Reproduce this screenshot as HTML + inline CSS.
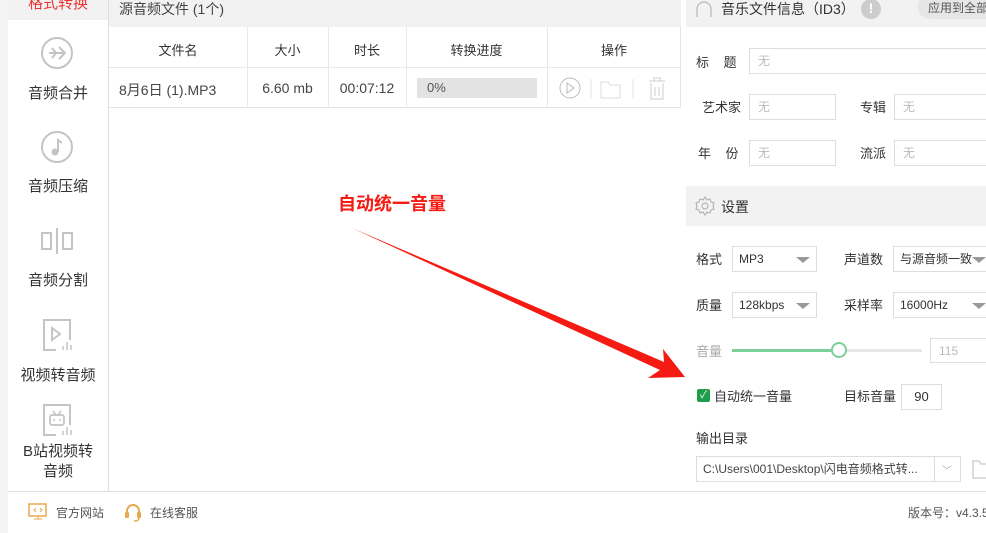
<!DOCTYPE html>
<html><head><meta charset="utf-8"><style>
*{margin:0;padding:0;box-sizing:border-box;white-space:nowrap}
body{width:986px;height:533px;overflow:hidden;background:#fff;font-family:"Liberation Sans","Noto Sans CJK SC",sans-serif;font-size:13px;color:#333;position:relative}
.a{position:absolute}
.side{left:8px;top:0;width:101px;height:491px;border-right:1px solid #ddd;background:#fff}
.si{position:absolute;left:0;width:100px;text-align:center;font-size:15px;color:#333}
.in{position:absolute;border:1px solid #ddd;height:26px;color:#bbb;font-size:12px;padding-left:8px;line-height:24px;background:#fff}
.lb{position:absolute;font-size:13px;color:#333}
.sel{position:absolute;border:1px solid #ddd;height:26px;font-size:12px;padding-left:6px;line-height:24px;color:#333;background:#fff}
.sel:after{content:"";position:absolute;right:6px;top:10px;border-left:7px solid transparent;border-right:7px solid transparent;border-top:6px solid #999}
</style></head><body>
<div class="a" style="left:0;top:0;width:8px;height:533px;background:#f4f4f4"></div>
<div class="a side">
 <div class="a" style="left:0;top:0;width:100px;height:20px;background:#f2f2f2"></div>
 <div class="si" style="top:-8px;color:#e33">格式转换</div>
 <svg class="a" style="left:32px;top:36px" width="34" height="34"><circle cx="17" cy="17" r="15" fill="none" stroke="#c4c4c4" stroke-width="2"/><path d="M9 17h16M19 11l6 6-6 6M12 12l4 5-4 5" fill="none" stroke="#c4c4c4" stroke-width="2"/></svg>
 <div class="si" style="top:82px">音频合并</div>
 <svg class="a" style="left:32px;top:130px" width="34" height="34"><circle cx="17" cy="17" r="15" fill="none" stroke="#c4c4c4" stroke-width="2"/><circle cx="15" cy="22" r="3.5" fill="#c4c4c4"/><path d="M18 22V10l4 3" fill="none" stroke="#c4c4c4" stroke-width="2"/></svg>
 <div class="si" style="top:175px">音频压缩</div>
 <svg class="a" style="left:32px;top:226px" width="34" height="30"><rect x="2" y="7" width="9" height="16" fill="none" stroke="#c4c4c4" stroke-width="2"/><rect x="23" y="7" width="9" height="16" fill="none" stroke="#c4c4c4" stroke-width="2"/><path d="M17 2v26" stroke="#c4c4c4" stroke-width="2"/></svg>
 <div class="si" style="top:269px">音频分割</div>
 <svg class="a" style="left:34px;top:318px" width="34" height="36"><path d="M28 22V2H2v30h12" fill="none" stroke="#c4c4c4" stroke-width="2"/><path d="M10 10l8 6-8 6z" fill="none" stroke="#c4c4c4" stroke-width="2"/><path d="M21 28v4M25 24v8M29 27v5" stroke="#c4c4c4" stroke-width="1.5"/></svg>
 <div class="si" style="top:364px">视频转音频</div>
 <svg class="a" style="left:34px;top:403px" width="34" height="36"><path d="M28 22V2H2v30h12" fill="none" stroke="#c4c4c4" stroke-width="2"/><rect x="8" y="12" width="14" height="10" rx="2" fill="none" stroke="#c4c4c4" stroke-width="1.8"/><path d="M11 8l3 4M19 8l-3 4M12 16v2M18 16v2" stroke="#c4c4c4" stroke-width="1.5"/><path d="M21 28v4M25 24v8M29 27v5" stroke="#c4c4c4" stroke-width="1.5"/></svg>
 <div class="si" style="top:442px;line-height:20px">B站视频转<br>音频</div>
</div>
<div class="a" style="left:109px;top:0;width:572px;height:27px;background:#f2f2f2;padding-left:10px;line-height:18px;font-size:14px;color:#444">源音频文件 (1个)</div>
<div class="a" style="left:109px;top:27px;width:572px;height:81px;border-bottom:1px solid #e5e5e5;border-right:1px solid #e5e5e5"></div>
<div class="a" style="left:109px;top:67px;width:572px;height:1px;background:#e8e8e8"></div>
<div class="a" style="left:247px;top:27px;width:1px;height:81px;background:#e8e8e8"></div>
<div class="a" style="left:328px;top:27px;width:1px;height:81px;background:#e8e8e8"></div>
<div class="a" style="left:406px;top:27px;width:1px;height:81px;background:#e8e8e8"></div>
<div class="a" style="left:547px;top:27px;width:1px;height:81px;background:#e8e8e8"></div>
<div class="a" style="left:109px;top:40px;width:138px;text-align:center">文件名</div>
<div class="a" style="left:247px;top:40px;width:81px;text-align:center">大小</div>
<div class="a" style="left:328px;top:40px;width:78px;text-align:center">时长</div>
<div class="a" style="left:406px;top:40px;width:141px;text-align:center">转换进度</div>
<div class="a" style="left:547px;top:40px;width:134px;text-align:center">操作</div>
<div class="a" style="left:119px;top:80px;font-size:14px;color:#444">8月6日 (1).MP3</div>
<div class="a" style="left:247px;top:80px;width:81px;text-align:center;font-size:14px;color:#444">6.60 mb</div>
<div class="a" style="left:328px;top:80px;width:78px;text-align:center;font-size:14px;color:#444">00:07:12</div>
<div class="a" style="left:417px;top:78px;width:120px;height:20px;background:#e3e3e3;padding-left:10px;line-height:20px;font-size:13px;color:#555">0%</div>
<svg class="a" style="left:558px;top:76px" width="115" height="26"><circle cx="12" cy="12" r="10" fill="none" stroke="#bbb"/><path d="M9 7l7 5-7 5z" fill="none" stroke="#bbb"/><path d="M33 3v20M75 3v20" stroke="#e5e5e5"/><path d="M43 6h7l2 3h10v13H43z" fill="none" stroke="#ddd"/><path d="M91 5h16M96 5V2h6v3M93 7v16h12V7M97 11v9M101 11v9" fill="none" stroke="#ccc"/></svg>
<div class="a" style="left:338px;top:190px;font-size:18px;font-weight:bold;color:#f51a12">自动统一音量</div>
<svg class="a" style="left:0;top:0" width="986" height="533"><path d="M352 228L664 362 663 349 685 377 648 378 660 370 Z" fill="#f51a12"/></svg>
<div class="a" style="left:686px;top:0;width:300px;height:27px;background:#f2f2f2"></div>
<svg class="a" style="left:694px;top:0" width="20" height="18"><path d="M3 16V9a7 7 0 0114 0v7M3 12v5M17 12v5" fill="none" stroke="#aaa"/></svg>
<div class="a" style="left:721px;top:0;font-size:14px;line-height:18px;color:#333">音乐文件信息（ID3）</div>
<div class="a" style="left:861px;top:-1px;width:20px;height:20px;border-radius:50%;background:#ccc;color:#fff;text-align:center;font-weight:bold;font-size:14px;line-height:18px">!</div>
<div class="a" style="left:918px;top:-6px;width:80px;height:25px;border-radius:12px;background:#e6e6e6;padding-left:10px;line-height:28px;font-size:12px;color:#555">应用到全部</div>
<div class="lb" style="left:696px;top:52px">标&nbsp;&nbsp;&nbsp;&nbsp;题</div>
<div class="in" style="left:749px;top:48px;width:250px">无</div>
<div class="lb" style="left:702px;top:97px">艺术家</div>
<div class="in" style="left:749px;top:94px;width:87px">无</div>
<div class="lb" style="left:860px;top:97px">专辑</div>
<div class="in" style="left:894px;top:94px;width:100px">无</div>
<div class="lb" style="left:698px;top:143px">年&nbsp;&nbsp;&nbsp;&nbsp;份</div>
<div class="in" style="left:749px;top:140px;width:87px">无</div>
<div class="lb" style="left:860px;top:143px">流派</div>
<div class="in" style="left:894px;top:140px;width:100px">无</div>
<div class="a" style="left:686px;top:186px;width:300px;height:40px;background:#f2f2f2"></div>
<svg class="a" style="left:695px;top:196px" width="20" height="20"><circle cx="10" cy="10" r="3" fill="none" stroke="#aaa"/><path d="M10 1l2 3 3-1 1 3 3 1-1 3 1 3-3 1-1 3-3-1-2 3-2-3-3 1-1-3-3-1 1-3-1-3 3-1 1-3 3 1z" fill="none" stroke="#aaa"/></svg>
<div class="a" style="left:721px;top:197px;font-size:14px">设置</div>
<div class="lb" style="left:696px;top:249px">格式</div>
<div class="sel" style="left:732px;top:246px;width:85px">MP3</div>
<div class="lb" style="left:844px;top:249px">声道数</div>
<div class="sel" style="left:893px;top:246px;width:100px">与源音频一致</div>
<div class="lb" style="left:696px;top:295px">质量</div>
<div class="sel" style="left:732px;top:292px;width:85px">128kbps</div>
<div class="lb" style="left:844px;top:295px">采样率</div>
<div class="sel" style="left:893px;top:292px;width:100px">16000Hz</div>
<div class="lb" style="left:696px;top:341px;color:#aaa">音量</div>
<div class="a" style="left:732px;top:349px;width:190px;height:3px;background:#e8e8e8"></div>
<div class="a" style="left:732px;top:349px;width:107px;height:3px;background:#7dcf98"></div>
<div class="a" style="left:831px;top:342px;width:16px;height:16px;border-radius:50%;border:2px solid #7dcf98;background:#fff"></div>
<div class="in" style="left:930px;top:338px;width:70px;height:25px">115</div>
<div class="a" style="left:697px;top:389px;width:13px;height:13px;background:#1e9e4a;border-radius:2px;color:#fff;font-size:10px;text-align:center;line-height:13px">✓</div>
<div class="lb" style="left:714px;top:386px">自动统一音量</div>
<div class="lb" style="left:844px;top:386px">目标音量</div>
<div class="in" style="left:901px;top:384px;width:41px;color:#333;text-align:center;padding:0;font-size:13px">90</div>
<div class="lb" style="left:696px;top:428px">输出目录</div>
<div class="in" style="left:696px;top:456px;width:265px;color:#444;padding-left:6px;font-size:12px">C:\Users\001\Desktop\闪电音频格式转...</div>
<div class="a" style="left:934px;top:457px;width:1px;height:24px;background:#ddd"></div>
<div class="a" style="left:942px;top:462px;font-size:10px;color:#aaa">﹀</div>
<svg class="a" style="left:972px;top:458px" width="14" height="22"><path d="M1 3h6l2 3h6v14H1z" fill="none" stroke="#bbb"/></svg>
<div class="a" style="left:8px;top:491px;width:978px;height:1px;background:#ddd"></div>
<svg class="a" style="left:28px;top:503px" width="20" height="18"><rect x="1" y="1" width="17" height="12" fill="none" stroke="#e9a94e" stroke-width="1.5"/><path d="M6 16h8M10 13v3M8 5l-2 2 2 2M12 5l2 2-2 2" fill="none" stroke="#e9a94e"/></svg>
<div class="a" style="left:56px;top:504px;font-size:12px;color:#555">官方网站</div>
<svg class="a" style="left:124px;top:503px" width="18" height="20"><path d="M3 11V8a6 6 0 0112 0v3" fill="none" stroke="#e9a94e" stroke-width="2"/><rect x="1" y="9" width="4" height="6" rx="1" fill="#e9a94e"/><rect x="13" y="9" width="4" height="6" rx="1" fill="#e9a94e"/><path d="M15 15q0 3-5 3" fill="none" stroke="#e9a94e" stroke-width="1.5"/></svg>
<div class="a" style="left:150px;top:504px;font-size:12px;color:#555">在线客服</div>
<div class="a" style="left:908px;top:504px;font-size:12px;color:#555">版本号：v4.3.5</div>
</body></html>
